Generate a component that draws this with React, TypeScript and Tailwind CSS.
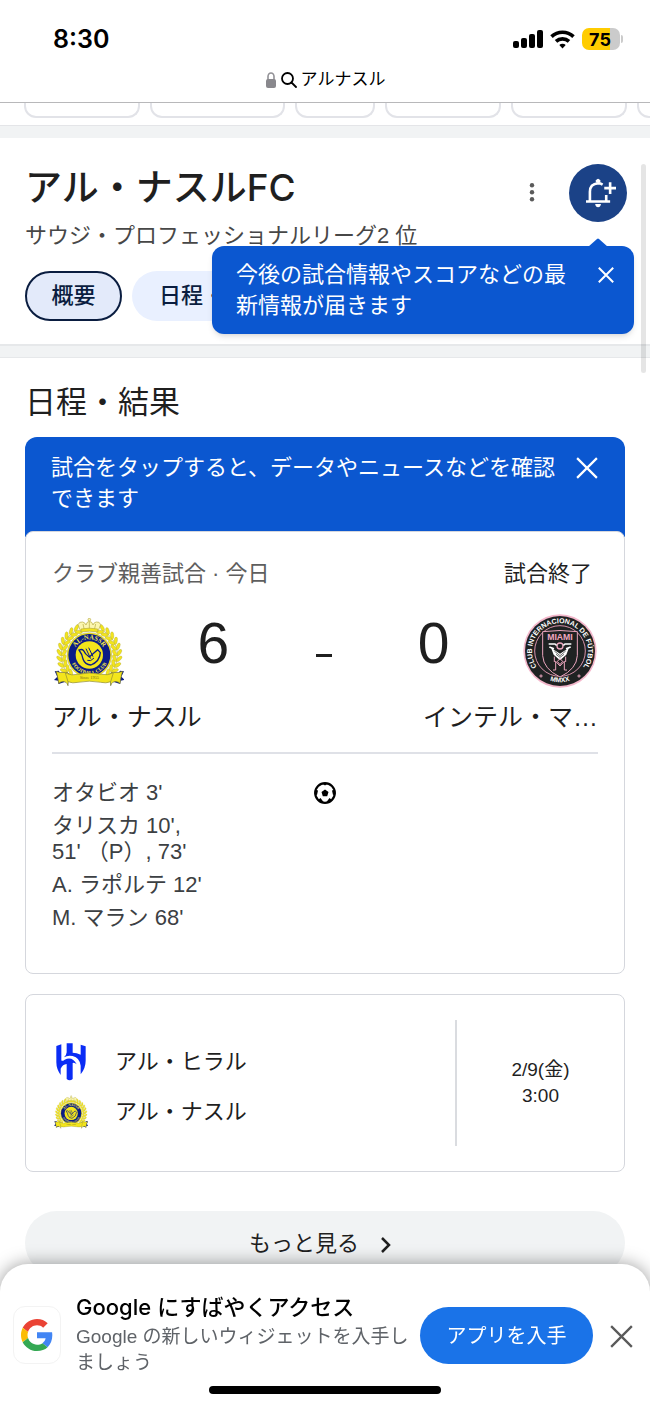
import React from "react";

const goals = [
  ["オタビオ 3'"],
  ["タリスカ 10',", "51' （P）, 73'"],
  ["A. ラポルテ 12'"],
  ["M. マラン 68'"],
];

function CloseIcon({ className }: { className: string }) {
  return (
    <svg viewBox="0 0 20 20" className={className} fill="none" stroke="currentColor" aria-hidden="true">
      <path d="M1 1 19 19M19 1 1 19" />
    </svg>
  );
}

function NassrCrest({ className }: { className: string }) {
  const leaves = [-62, -50, -38, -26, -14, -2, 10, 22, 34, 46];
  return (
    <svg viewBox="0 0 210 204" className={className} role="img" aria-label="アル・ナスル">
      <defs>
        <path id="nassr-top" d="M59 111a47 47 0 0 1 94 0" />
        <path id="nassr-bottom" d="M48 111a58 58 0 0 0 116 0" />
      </defs>
      {[0, 1].map((side) => (
        <g key={side} transform={side ? "translate(212 0) scale(-1 1)" : undefined}>
          <path d="M52 176A84 84 0 0 1 62 40" fill="none" stroke="#b9b03a" strokeWidth="2" />
          {leaves.map((a) => (
            <g key={a} transform={`rotate(${-a} 106 111)`}>
              <ellipse cx="16" cy="107" rx="5" ry="11" transform="rotate(-35 16 107)" fill="#f3e51c" stroke="#a9a24a" strokeWidth="1" />
              <ellipse cx="30" cy="107" rx="5" ry="11" transform="rotate(30 30 107)" fill="#f3e51c" stroke="#a9a24a" strokeWidth="1" />
            </g>
          ))}
        </g>
      ))}
      <g fill="#fbf6b0" stroke="#b5a93e" strokeWidth="2">
        <path d="M80 40 72 20q4-10 14-8 8 2 10 9 2-10 10-11 9 1 11 11 2-8 10-9 10-2 13 8l-8 20q-26-5-52 0Z" />
        <path d="M91 36 87 18M106 34V12M121 36l4-18" fill="none" />
        <circle cx="106" cy="5" r="4" />
        <path d="M81 33q25-5 50 0v9q-25-5-50 0Z" fill="#f3e51c" />
      </g>
      <circle cx="106" cy="111" r="67" fill="#f3e51c" stroke="#8d8a3a" strokeWidth="1" />
      <circle cx="106" cy="111" r="63" fill="#0b1c86" />
      <circle cx="106" cy="111" r="41" fill="#f3e51c" />
      <path d="M75 96q9-4 14 2 4 10 17 19l25-22 8 9q-2 27-28 37-18-1-24-18-2-14-12-27Z" fill="#f3e51c" stroke="#0b1c86" strokeWidth="4" />
      <path d="m96 92 14 30M104 89l13 27M100 127q10 5 20-7" fill="none" stroke="#0b1c86" strokeWidth="3" />
      <g fill="#f7ec4a" fontWeight="700" fontFamily="Liberation Serif, serif">
        <text fontSize="20" textAnchor="middle"><textPath href="#nassr-top" startOffset="50%">AL-NASSR</textPath></text>
        <text fontSize="15" textAnchor="middle"><textPath href="#nassr-bottom" startOffset="50%">FOOTBALL CLUB</textPath></text>
      </g>
      <path d="M2 160 14 158 32 192 14 198 12 188 0 186 10 176ZM210 160 198 158 180 192 198 198 200 188 212 186 202 176Z" fill="#0b1c86" />
      <path d="M6 160q14 6 28 3 8-1 10 4l-2 36q-4-14-18-12-8 1-10 6l-2-14q-3-15-6-23ZM206 160q-14 6-28 3-8-1-10 4l2 36q4-14 18-12 8 1 10 6l2-14q3-15 6-23Z" fill="#f3e51c" stroke="#6c6b35" strokeWidth="2" />
      <path d="M34 165q20 9 36 4 36-8 72 0 18 4 36-4l-8 26q-14 6-30 2-34-7-68 0-16 4-30-2Z" fill="#f3e51c" stroke="#8d8a3a" strokeWidth="2" />
      <text x="106" y="184" fontSize="13" textAnchor="middle" fill="#77701f" fontFamily="Liberation Serif, serif">Since 1955</text>
    </svg>
  );
}

function MiamiCrest({ className }: { className: string }) {
  return (
    <svg viewBox="0 0 222 222" className={className} role="img" aria-label="インテル・マイアミ">
      <defs>
        <path id="miami-top" d="M49 168A84 84 0 1 1 173 168" />
        <path id="miami-bottom" d="M60 190A97 97 0 0 0 162 190" />
      </defs>
      <circle cx="111" cy="111" r="110" fill="#f3b7cb" />
      <circle cx="111" cy="111" r="105" fill="#1f2222" />
      <circle cx="111" cy="111" r="76" fill="none" stroke="#d792aa" strokeWidth="3" />
      <path d="M59 53q52-7 104 0v72q-2 40-52 64-50-24-52-64Z" fill="#1f2222" stroke="#eba6be" strokeWidth="3" />
      <g fontFamily="Liberation Sans, sans-serif" fontWeight="700">
        <text fontSize="21" fill="#fff" textAnchor="middle"><textPath href="#miami-top" startOffset="50%">CLUB INTERNACIONAL DE FÚTBOL</textPath></text>
        <text fontSize="20" fill="#fff" textAnchor="middle"><textPath href="#miami-bottom" startOffset="50%">MMXX</textPath></text>
        <text x="111" y="78" fontSize="26" fill="#f0a8c0" textAnchor="middle">MIAMI</text>
      </g>
      <circle cx="111" cy="96" r="9" fill="none" stroke="#eba6be" strokeWidth="4" />
      <path d="M77 90h18q4 0 5 5M145 90h-18q-4 0-5 5M79 99l14 5M143 99l-14 5" stroke="#fff" strokeWidth="5" fill="none" />
      <path d="M84 101l27 18 27-18-8 21-19 17-19-17Z" fill="#fff" />
      <path d="m94 111 17 14 17-14M99 121l12 9 12-9" stroke="#1f2222" strokeWidth="2" fill="none" />
      <path d="M90 168h8v-26l13 14 13-14v26h8M94 128v16M128 128v16M103 142l8-8 8 8-8 10Z" stroke="#eba6be" strokeWidth="3" fill="none" />
      <path d="M54 181v10M49 186h10M168 181v10M163 186h10" stroke="#eba6be" strokeWidth="3" />
    </svg>
  );
}

function HilalCrest({ className }: { className: string }) {
  return (
    <svg viewBox="0 0 90 114" className={className} role="img" aria-label="アル・ヒラル" fill="#0a2cf5">
      <path d="M32 1h18v28q12 0 24 6V5l15 5v43q0 22-15 41V68q-3-24-24-29-16-3-26 4 8-8 8-15Z" />
      <path d="M1 9 16 4v48q2 4 10-2 23-11 36 14-6-6-12-4v48q-9 8-18 0V63q-12 1-18 14v19Q1 78 1 58Z" />
    </svg>
  );
}

export default function App() {
  return (
    <div className="relative flex min-h-screen flex-col overflow-x-hidden bg-white pb-[132px] font-['Liberation_Sans','Noto_Sans_CJK_JP',sans-serif] text-[#1f1f1f]">
      <header className="border-b border-[#b8b8ba]">
        <div className="flex h-[66px] items-center justify-between pt-3 pr-[27px] pl-[53px]">
          <time className="font-['Inter',sans-serif] text-[25px] leading-8 font-semibold text-black">8:30</time>
          <div className="flex items-center gap-[7px]">
            <svg viewBox="0 0 30 20" className="h-5 w-[30px]" aria-label="電波" role="img">
              <rect x="0" y="12" width="6" height="7" rx="2" />
              <rect x="8" y="9" width="6" height="10" rx="2" />
              <rect x="16" y="5" width="6" height="14" rx="2" />
              <rect x="24" y="1" width="6" height="18" rx="2" />
            </svg>
            <svg viewBox="0 0 25 19" className="h-[19px] w-[25px]" fill="none" stroke="#000" strokeWidth="3.6" aria-label="Wi-Fi" role="img">
              <path d="M1.5 6.6a16 16 0 0 1 22 0M6 11.4a9.6 9.6 0 0 1 13 0" />
              <path d="m12.500 18.500-3.200-3.400a4.600 4.600 0 0 1 6.400 0Z" fill="#000" stroke="none" />
            </svg>
            <div className="flex items-center gap-px">
              <div className="flex h-[22px] w-[38px] items-center justify-center rounded-[7px] bg-[linear-gradient(to_right,#ffcc00_75%,#cbcbcb_75%)] pr-[2px] font-['Inter',sans-serif] text-[18px] font-bold text-black">75</div>
              <div className="h-2 w-[2px] rounded-r bg-[#cbcbcb]" />
            </div>
          </div>
        </div>
        <div className="flex h-9 items-center justify-center gap-1 pb-2 text-[17px] text-black">
          <svg viewBox="0 0 12 16" className="h-4 w-3" aria-hidden="true">
            <path d="M3 8V4.600a3 3.600 0 0 1 6 0V8" fill="none" stroke="#929196" strokeWidth="1.600" />
            <rect x="1" y="7" width="10" height="9" rx="2" fill="#89888d" />
          </svg>
          <svg viewBox="0 0 16 16" className="h-4 w-4" fill="none" stroke="currentColor" strokeWidth="1.800" strokeLinecap="round" aria-hidden="true">
            <circle cx="6.500" cy="6.500" r="5.500" />
            <path d="m10.500 10.500 4.500 4.500" />
          </svg>
          <span>アルナスル</span>
        </div>
      </header>

      <div className="flex h-[23px] items-start gap-[10px] overflow-hidden border-b border-[#e4e5e8] pl-6" aria-hidden="true">
        <div className="h-[15px] w-[116px] shrink-0 rounded-b-xl border-2 border-t-0 border-[#e2e3e8]" />
        <div className="h-[15px] w-[135px] shrink-0 rounded-b-xl border-2 border-t-0 border-[#e2e3e8]" />
        <div className="h-[15px] w-20 shrink-0 rounded-b-xl border-2 border-t-0 border-[#e2e3e8]" />
        <div className="h-[15px] w-[116px] shrink-0 rounded-b-xl border-2 border-t-0 border-[#e2e3e8]" />
        <div className="h-[15px] w-[116px] shrink-0 rounded-b-xl border-2 border-t-0 border-[#e2e3e8]" />
        <div className="h-[15px] w-[116px] shrink-0 rounded-b-xl border-2 border-t-0 border-[#e2e3e8]" />
      </div>
      <div className="h-3 bg-[#f1f3f4]" />

      <section className="relative h-[206px] pt-[26px] pr-[23px] pl-[25px]">
        <div className="flex justify-between">
          <div>
            <h1 className="text-[37px] leading-[48px] font-medium">
              アル・ナスル<span className="font-['Inter',sans-serif]">FC</span>
            </h1>
            <p className="mt-[7px] text-[22px] leading-8 text-[#474747]">サウジ・プロフェッショナルリーグ2 位</p>
          </div>
          <div className="flex h-[58px] items-center gap-[27px]">
            <button type="button" aria-label="その他" className="flex w-5 justify-center">
              <svg viewBox="0 0 6 20" className="h-5 w-[6px]" fill="#5a5a5a" aria-hidden="true">
                <circle cx="3" cy="2.200" r="2.200" />
                <circle cx="3" cy="9.200" r="2.200" />
                <circle cx="3" cy="16.200" r="2.200" />
              </svg>
            </button>
            <button type="button" aria-label="通知を受け取る" className="flex size-[58px] items-center justify-center rounded-full bg-[#1b4287] pl-[6px]">
              <svg viewBox="0 0 92 92" className="h-[30px] w-[30px]" fill="none" stroke="#fff" strokeWidth="8" aria-hidden="true">
                <path d="M0 72h74M12 72V42q0-24 25-26 7 0 14 4M62 72V52" />
                <path d="M30 14V8q7-12 14 0v6Z" fill="#fff" stroke="none" />
                <path d="M28 80h18q-2 10-9 10t-9-10Z" fill="#fff" stroke="none" />
                <path d="M74 13v36M56 31h36" />
              </svg>
            </button>
          </div>
        </div>
        <nav className="mt-[19px] flex gap-[10px] text-[22px] text-[#0a1d40]">
          <button type="button" className="h-[50px] w-[97px] rounded-[25px] border-2 border-[#0a1d40] bg-[#e3eafa] pb-[2px] font-medium">概要</button>
          <button type="button" className="h-[50px] rounded-[25px] bg-[#e9f0ff] px-[27px] pb-[2px] font-medium">日程・結果</button>
        </nav>
        <div role="tooltip" className="absolute top-[108px] right-4 z-10 flex w-[422px] justify-between rounded-xl bg-[#0b57d0] pt-[13px] pr-5 pb-[13px] pl-6 text-[22px] leading-[31px] text-white shadow-md">
          <svg viewBox="0 0 20 9" className="absolute -top-2 right-[26px] h-[9px] w-5" fill="#0b57d0" aria-hidden="true">
            <path d="M0 9 9 1q1-1 2 0l9 8Z" />
          </svg>
          <p className="w-[332px]">今後の試合情報やスコアなどの最新情報が届きます</p>
          <button type="button" aria-label="閉じる" className="mt-2 h-4">
            <CloseIcon className="size-4 stroke-[2.5]" />
          </button>
        </div>
      </section>
      <div className="h-[14px] border-y border-t-2 border-[#e6e8ea] bg-[#f1f3f4]" />
      <div className="absolute top-[164px] right-1 z-20 h-[209px] w-[5px] rounded-full bg-black/10" aria-hidden="true" />

      <main className="px-[25px] pt-[25px]">
        <h2 className="text-[31px] leading-[40px]">日程・結果</h2>
        <div className="mt-[14px] flex justify-between gap-5 rounded-t-xl bg-[#0b57d0] pt-[15px] pr-[27px] pb-[23px] pl-[26px] text-[22px] leading-[31px] text-white">
          <p className="flex-1">試合をタップすると、データやニュースなどを確認できます</p>
          <button type="button" aria-label="閉じる" className="mt-[5px] h-5 w-[22px]">
            <CloseIcon className="size-[22px] stroke-2" />
          </button>
        </div>

        <article className="-mt-[6px] h-[443px] rounded-lg border border-[#d5d7dd] bg-white px-[26px] pt-[27px]">
          <div className="flex justify-between text-[22px] leading-[30px]">
            <span className="text-[#5e5e5e]">クラブ親善試合 · 今日</span>
            <span className="pr-[6px]">試合終了</span>
          </div>
          <div className="mt-[25px] flex h-[76px] items-start justify-between pr-px pl-[2px]">
            <NassrCrest className="mt-1 h-[68px] w-[70px]" />
            <div className="flex w-[252px] items-center justify-between text-[57px] leading-[58px]">
              <span>6</span>
              <span className="mt-6 h-[3px] w-4 bg-[#1f1f1f]" />
              <span>0</span>
            </div>
            <MiamiCrest className="size-[74px]" />
          </div>
          <div className="mt-[9px] flex justify-between text-[25px] leading-[36px]">
            <span>アル・ナスル</span>
            <span>インテル・マ…</span>
          </div>
          <div className="mt-[17px] grid grid-cols-[1fr_24px_1fr] border-t-2 border-[#dfe1e7] pt-[26px]">
            <ul className="flex flex-col gap-[7px] text-[22px] leading-[26px] text-[#3c4043]">
              {goals.map((lines) => (
                <li key={lines[0]}>
                  {lines.map((line) => (
                    <span key={line} className="block">{line}</span>
                  ))}
                </li>
              ))}
            </ul>
            <svg viewBox="0 0 24 24" className="mt-px size-6" role="img" aria-label="ゴール">
              <circle cx="12" cy="12" r="9.800" fill="#fff" stroke="#000" strokeWidth="2.200" />
              <path d="m12 8.500 3.500 2.500-1.300 4.200H9.800L8.500 11ZM8.500 2h7L12 4.500ZM2 8.500l3 1L4 14l-2.500-1ZM22 8.500l-3 1 1 4.500 2.500-1ZM5 19l2.500-2 3 4L7 21.500ZM19 19l-2.500-2-3 4 3.500.5Z" />
            </svg>
          </div>
        </article>

        <article className="mt-5 flex h-[178px] items-center rounded-lg border border-[#d5d7dd] py-6 pl-[28px]">
          <ul className="flex flex-1 flex-col gap-[10px] pt-2 text-[22px] leading-10">
            <li className="flex items-center gap-[27px]">
              <HilalCrest className="h-[38px] w-[34px]" />
              アル・ヒラル
            </li>
            <li className="flex items-center gap-[27px]">
              <NassrCrest className="h-[34px] w-[34px]" />
              アル・ナスル
            </li>
          </ul>
          <div className="flex h-[126px] w-[169px] flex-col items-center justify-center border-l-2 border-[#dadce0] text-[19px] leading-[26px]">
            <span>2/9(金)</span>
            <span>3:00</span>
          </div>
        </article>

        <button type="button" className="mt-[39px] flex h-16 w-full items-center justify-center gap-[22px] rounded-full bg-[#f1f3f4] pr-[10px] text-[22px]">
          もっと見る
          <svg viewBox="0 0 10 16" className="mt-1 h-4 w-[10px]" fill="none" stroke="currentColor" strokeWidth="2.500" aria-hidden="true">
            <path d="m1 1 7 7-7 7" />
          </svg>
        </button>
      </main>

      <aside className="fixed inset-x-0 bottom-0 z-30 flex h-[143px] items-start rounded-t-[28px] bg-white pt-[27px] pr-[17px] pl-[13px] shadow-[0_0_18px_rgba(0,0,0,0.4)]">
        <div className="mt-[15px] flex h-[58px] w-12 shrink-0 items-center justify-center rounded-xl border border-[#f3f3f3]">
          <svg viewBox="0 0 48 48" className="size-8" role="img" aria-label="Google">
            <path fill="#ea4335" d="M24 9.500c3.540 0 6.710 1.220 9.210 3.600l6.850-6.850C35.900 2.380 30.470 0 24 0 14.620 0 6.510 5.380 2.560 13.220l7.980 6.190C12.430 13.720 17.740 9.500 24 9.500z" />
            <path fill="#4285f4" d="M46.980 24.550c0-1.570-.15-3.090-.38-4.550H24v9.020h12.940c-.58 2.960-2.260 5.480-4.780 7.180l7.730 6c4.510-4.180 7.090-10.360 7.090-17.650z" />
            <path fill="#fbbc05" d="M10.530 28.590c-.48-1.450-.76-2.990-.76-4.590s.27-3.140.76-4.590l-7.980-6.190C.92 16.460 0 20.120 0 24c0 3.880.92 7.540 2.560 10.780l7.970-6.190z" />
            <path fill="#34a853" d="M24 48c6.480 0 11.930-2.130 15.890-5.810l-7.730-6c-2.150 1.450-4.920 2.300-8.160 2.300-6.260 0-11.570-4.220-13.470-9.910l-7.980 6.190C6.510 42.620 14.620 48 24 48z" />
          </svg>
        </div>
        <div className="ml-[15px] min-w-0 flex-1">
          <p className="text-[22px] leading-8 font-medium text-black">
            <span className="font-['Inter',sans-serif]">Google</span> にすばやくアクセス
          </p>
          <p className="text-[19px] leading-[26px] text-[#5f6368]">Google の新しいウィジェットを入手しましょう</p>
        </div>
        <button type="button" className="mt-4 ml-1 h-[57px] w-[173px] shrink-0 rounded-full bg-[#1a73e8] text-[20px] text-white">アプリを入手</button>
        <button type="button" aria-label="閉じる" className="mt-[34px] ml-[17px] shrink-0 text-[#5a5a5a]">
          <CloseIcon className="size-[23px] stroke-2" />
        </button>
        <div className="absolute bottom-[13px] left-1/2 h-2 w-[232px] -translate-x-1/2 rounded-full bg-black" aria-hidden="true" />
      </aside>
    </div>
  );
}
